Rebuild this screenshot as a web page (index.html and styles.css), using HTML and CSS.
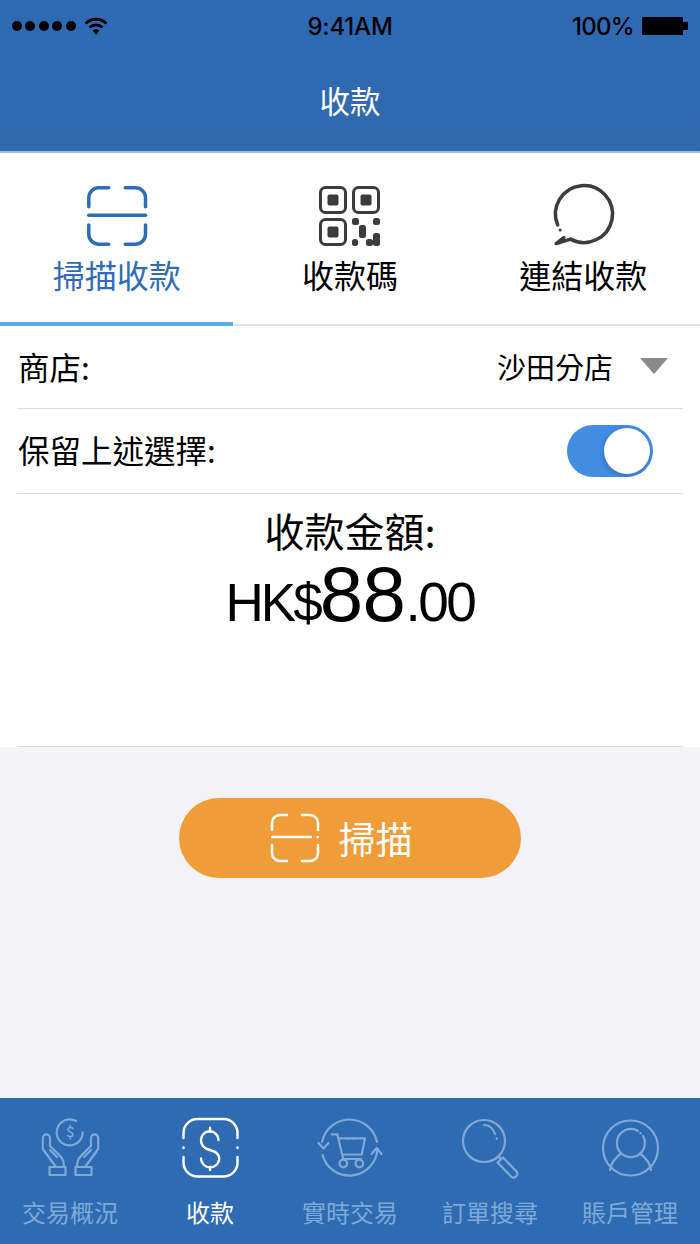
FILE: index.html
```html
<!DOCTYPE html>
<html lang="zh-Hant">
<head>
<meta charset="utf-8">
<title>收款</title>
<link rel="stylesheet" href="styles.css">
</head>
<body>
<div class="app">
  <header class="header">
    <div class="status">
      <div class="status-left">
        <div class="dots"><i></i><i></i><i></i><i></i><i></i></div>
        <svg class="wifi" viewBox="0 0 24 20"><path d="M1.500 7.500a15 15 0 0 1 21 0" class="wifi-arc"/><path d="M5.500 11.500a9.500 9.500 0 0 1 13 0" class="wifi-arc"/><path d="M8.600 14.600a5 5 0 0 1 6.800 0L12 19z" class="wifi-fill"/></svg>
      </div>
      <div class="status-time">9:41AM</div>
      <div class="status-right">
        <span class="status-pct">100%</span>
        <div class="battery"><div class="battery-body"></div><div class="battery-nub"></div></div>
      </div>
    </div>
    <h1 class="title">收款</h1>
  </header>

  <main class="content">
    <nav class="tabs">
      <div class="tab tab-active">
        <svg class="tab-icon" viewBox="0 0 62 62"><g class="stroke-active"><path d="M22.700 1.800H12.800A10 10 0 0 0 2.800 11.800V20.700"/><path d="M39.300 1.800H49.500A10 10 0 0 1 59.500 11.800V20.700"/><path d="M2.800 29.300H59.500"/><path d="M2.800 39V48.200A10 10 0 0 0 12.800 58.200H22.700"/><path d="M39.300 58.200H49.500A10 10 0 0 0 59.500 48.200V39"/></g></svg>
        <span>掃描收款</span>
      </div>
      <div class="tab">
        <svg class="tab-icon" viewBox="0 0 62 62">
          <g class="qr-frame"><rect x="1.500" y="1.500" width="25" height="25" rx="5"/><rect x="34.500" y="1.500" width="25" height="25" rx="5"/><rect x="1.500" y="33.500" width="25" height="25" rx="5"/></g>
          <g class="qr-fill"><rect x="8.500" y="8.500" width="11" height="11" rx="2"/><rect x="41.500" y="8.500" width="11" height="11" rx="2"/><rect x="8.500" y="40.500" width="11" height="11" rx="2"/><rect x="33" y="32" width="7" height="7" rx="2.500"/><rect x="54" y="32" width="7" height="7" rx="2.500"/><rect x="40" y="39" width="7" height="13" rx="2.500"/><rect x="54" y="47" width="7" height="13" rx="2.500"/><rect x="47" y="53" width="7" height="7" rx="2.500"/><rect x="33" y="53" width="6" height="7" rx="2.500"/></g>
        </svg>
        <span>收款碼</span>
      </div>
      <div class="tab">
        <svg class="tab-icon tab-icon-wide" viewBox="-1.500 3 64 62"><g class="bubble"><path d="M5.200 42A28.500 28.500 0 1 1 18 56.100L3.700 60.500 11.300 54.500"/></g><circle cx="7.600" cy="47" r="1.600" class="bubble-dot"/></svg>
        <span>連結收款</span>
      </div>
    </nav>

    <div class="row row-store">
      <span>商店:</span>
      <div class="picker"><span class="picker-text">沙田分店</span><i class="caret"></i></div>
    </div>
    <div class="row row-keep">
      <span class="row-keep-label">保留上述選擇:</span>
      <div class="toggle"><i class="knob"></i></div>
    </div>
    <section class="amount">
      <div class="amount-label">收款金額:</div>
      <div class="amount-value"><span class="amount-cur">HK$</span><b>88</b><span class="amount-dec">.00</span></div>
    </section>
  </main>

  <section class="actions">
    <button class="scan-btn">
      <svg class="scan-icon" viewBox="0 0 50 50"><g class="stroke-white"><path d="M17 2H10A8 8 0 0 0 2 10V17"/><path d="M32 2H40A8 8 0 0 1 48 10V17"/><path d="M2 24H41"/><path d="M47.500 24H48"/><path d="M2 32V40A8 8 0 0 0 10 48H17"/><path d="M32 48H40A8 8 0 0 0 48 40V32"/></g></svg>
      <span>掃描</span>
    </button>
  </section>

  <nav class="bottom">
    <div class="bottom-item">
      <svg class="nav-icon" viewBox="0 0 57 60"><g class="nav-stroke">
        <path d="M34 3A13 13 0 1 0 40.700 14.300"/>
        <path class="nav-thin" d="M31 10.500C30 9 26 9 26 11.500S31 14 31 16.500 27 19 25.500 17.500M28.300 7.500V9M28.300 19V21"/>
        <path d="M22 49C22 40 20 40 8 28V20A3.600 3.600 0 0 0 .8 20V31L14 49"/><path d="M8 32L15 39"/><rect x="7.500" y="49" width="16" height="8"/>
        <path d="M35 49C35 40 37 40 49 28V20A3.600 3.600 0 0 1 56.200 20V31L43 49"/><path d="M49 32L42 39"/><rect x="33.500" y="49" width="16" height="8"/>
      </g></svg>
      <span>交易概況</span>
    </div>
    <div class="bottom-item bottom-active">
      <svg class="nav-icon" viewBox="0 0 57 60"><g class="nav-stroke-active">
        <path d="M1.500 20V15A14 14 0 0 1 15.500 1H41.500A14 14 0 0 1 55.500 15V20"/>
        <path d="M1.500 39V44.500A14 14 0 0 0 15.500 58.500H41.500A14 14 0 0 0 55.500 44.500V39"/>
        <path d="M1.500 29.500V30M55.500 29.500V30"/>
        <path d="M36.500 22A8.700 8.700 0 0 0 19 22C19 28 24 31 28 32 32 33 37.300 35 37.300 40.500A9 8.700 0 0 1 19 40.500M28 9.700V13.700M28 48.700V52"/>
      </g></svg>
      <span>收款</span>
    </div>
    <div class="bottom-item">
      <svg class="nav-icon nav-wide" viewBox="0 0 64 60"><g class="nav-stroke">
        <path d="M4.050 24A28 28 0 0 1 58.950 24"/><path d="M0.500 25L5.500 30.500 10.500 25"/><path d="M59.460 31A28 28 0 0 1 4.500 37"/><path d="M53.500 36L58.700 30 63.500 36"/>
        <path d="M13.700 16.300H19.300L25.300 41H43"/><path d="M21.300 20.300H47L43.700 36.500H24.500"/><path d="M29 20.500H30.500M35 20.500H36.500"/>
        <circle cx="25.300" cy="45.500" r="3.800"/><circle cx="41.300" cy="45.500" r="3.800"/>
      </g></svg>
      <span>實時交易</span>
    </div>
    <div class="bottom-item">
      <svg class="nav-icon" viewBox="0 0 57 60"><g class="nav-stroke">
        <circle cx="22" cy="23" r="21"/><path d="M22 7C27 7 31 10 33 16"/><path d="M34.700 20.300V20.800"/>
        <path d="M36.800 37.800L38.500 41.500"/>
        <path d="M41 39.500L55 54A3.900 3.900 0 0 1 49.500 59L35.500 44.500z"/>
      </g></svg>
      <span>訂單搜尋</span>
    </div>
    <div class="bottom-item">
      <svg class="nav-icon" viewBox="0 0 57 60"><g class="nav-stroke">
        <circle cx="28.500" cy="30" r="27.500"/>
        <path d="M36 13A14 14 0 1 0 41 18"/><path d="M38.500 15V15.500"/>
        <path d="M8 52C9 45 13 40 19 35.500"/><path d="M49 52C48 45 44 40 38 35.500"/>
      </g></svg>
      <span>賬戶管理</span>
    </div>
  </nav>
</div>
</body>
</html>
```

FILE: styles.css
```css
* { box-sizing: border-box; }
html, body { margin: 0; padding: 0; }
body {
  font-family: "Noto Sans CJK TC", "Noto Sans", sans-serif;
  color: #000;
  background: #f2f2f7;
}
.app {
  width: 700px;
  height: 1244px;
  display: flex;
  flex-direction: column;
  overflow: hidden;
}

/* Header */
.header {
  height: 153px;
  flex: none;
  background: linear-gradient(#2e6bb5, #3069ae);
  border-bottom: 2px solid #a3bcdc;
  display: flex;
  flex-direction: column;
}
.status {
  height: 52px;
  padding: 0 12px;
  display: flex;
  align-items: center;
  justify-content: space-between;
  font-family: Inter, "Liberation Sans", sans-serif;
  font-size: 24px;
  font-weight: 500;
  letter-spacing: -.2px;
}
.status-left { display: flex; align-items: center; gap: 8px; width: 180px; }
.dots { display: flex; gap: 3.400px; }
.dots i { width: 10px; height: 10px; border-radius: 50%; background: #000; }
.wifi { width: 24px; height: 20px; }
.wifi-arc { fill: none; stroke: #000; stroke-width: 3; }
.wifi-fill { fill: #000; }
.status-time { text-align: center; }
.status-right { display: flex; align-items: center; justify-content: flex-end; gap: 8px; width: 180px; }
.status-pct { letter-spacing: -.7px; }
.battery { display: flex; align-items: center; }
.battery-body { width: 41px; height: 18px; background: #000; }
.battery-nub { width: 5px; height: 8px; background: #000; }
.title {
  margin: 0;
  flex: 1;
  display: flex;
  align-items: center;
  justify-content: center;
  padding-bottom: 3px;
  font-size: 30.500px;
  font-weight: 400;
  color: #fff;
}

/* Main white panel */
.content { flex: none; background: #fff; }
.tabs {
  height: 173px;
  display: flex;
  border-bottom: 2px solid #e6e6ea;
}
.tab {
  width: 233.330px;
  height: 173px;
  padding-top: 33px;
  display: flex;
  flex-direction: column;
  align-items: center;
  font-size: 32px;
  line-height: 46px;
  color: #000;
}
.tab span { margin-top: 3px; }
.tab-icon { width: 62px; height: 62px; flex: none; overflow: visible; }
.tab-icon-wide { width: 64px; }
.tab-active { color: #2e6db5; border-bottom: 4px solid #5aaee0; }
.stroke-active path { fill: none; stroke: #2e6db5; stroke-width: 3.500; stroke-linecap: round; }
.qr-frame rect { fill: none; stroke: #3c3c3c; stroke-width: 3; }
.qr-fill rect { fill: #3c3c3c; }
.bubble path { fill: none; stroke: #3c3c3c; stroke-width: 3.500; stroke-linejoin: round; stroke-linecap: round; }
.bubble-dot { fill: #3c3c3c; }

/* Rows */
.row {
  margin: 0 17px;
  padding: 0 1px;
  display: flex;
  align-items: center;
  justify-content: space-between;
  font-size: 31.500px;
  border-bottom: 1px solid #dcdce0;
}
.row-store { height: 83px; padding-right: 15px; padding-bottom: 3px; }
.row-keep { height: 85px; padding-right: 30px; }
.row-keep-label { margin-top: -4px; }
.picker { display: flex; align-items: center; gap: 27px; }
.picker-text { font-size: 29px; }
.caret {
  width: 0;
  height: 0;
  border-left: 14.500px solid transparent;
  border-right: 14.500px solid transparent;
  border-top: 16px solid #8a8a8a;
}
.toggle {
  width: 86px;
  height: 52px;
  padding: 3px;
  border-radius: 26px;
  background: #428ce2;
  display: flex;
  justify-content: flex-end;
}
.knob {
  width: 46px;
  height: 46px;
  border-radius: 50%;
  background: #fff;
  box-shadow: -1px 2px 5px rgba(0, 0, 0, .18);
}

/* Amount */
.amount {
  margin: 0 17px;
  height: 253px;
  text-align: center;
  border-bottom: 1px solid #dcdce0;
}
.amount-label { font-size: 40px; line-height: 48px; padding-top: 12px; }
.amount-value {
  font-family: "Liberation Sans", sans-serif;
  line-height: 76px;
  padding-top: 2px;
}
.amount-cur { font-size: 53px; letter-spacing: -3px; }
.amount-value b { font-size: 78px; font-weight: 400; letter-spacing: -.5px; }
.amount-dec { font-size: 55px; letter-spacing: -2.500px; }

/* Action area */
.actions {
  flex: 1;
  padding-top: 51px;
  background: #f2f2f7;
  display: flex;
  justify-content: center;
  align-items: flex-start;
}
.scan-btn {
  width: 342px;
  height: 80px;
  border: 0;
  padding: 0 18px 0 0;
  border-radius: 40px;
  background: #f09c39;
  color: #fff;
  font-family: inherit;
  font-size: 37px;
  display: flex;
  align-items: center;
  justify-content: center;
  gap: 19px;
}
.scan-icon { width: 50px; height: 50px; }
.stroke-white path { fill: none; stroke: #fff; stroke-width: 2.500; stroke-linecap: round; }

/* Bottom navigation */
.bottom {
  height: 146px;
  flex: none;
  background: #2e6bb3;
  display: flex;
}
.bottom-item {
  width: 140px;
  padding-top: 20px;
  display: flex;
  flex-direction: column;
  align-items: center;
  font-size: 24px;
  line-height: 36px;
  color: #7fa9d6;
}
.bottom-item span { margin-top: 16px; }
.nav-icon { width: 57px; height: 60px; flex: none; overflow: visible; }
.nav-wide { width: 64px; }
.bottom-active { color: #fff; }
.nav-stroke > * { fill: none; stroke: #7fa9d6; stroke-width: 2.200; stroke-linecap: round; stroke-linejoin: round; }
.nav-stroke > .nav-thin { stroke-width: 1.600; }
.nav-stroke-active > * { fill: none; stroke: #fff; stroke-width: 2.400; stroke-linecap: round; stroke-linejoin: round; }
```
